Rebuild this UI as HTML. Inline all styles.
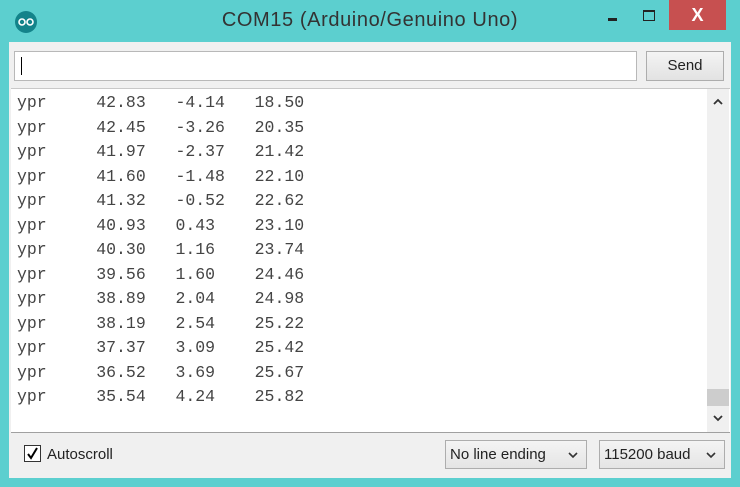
<!DOCTYPE html>
<html><head><style>
*{margin:0;padding:0;box-sizing:border-box}
body{width:740px;height:487px;background:#5ccfcf;position:relative;overflow:hidden;font-family:"Liberation Sans",sans-serif}
.abs{position:absolute}
#title{left:0;top:9px;width:740px;text-align:center;font-size:20px;color:#333;letter-spacing:0.6px}
#panel{left:9px;top:42px;width:722px;height:436px;background:#f0f0f0}
#input{left:14px;top:51px;width:623px;height:30px;background:#fff;border:1px solid #b8b8b8}
#send{left:646px;top:51px;width:78px;height:30px;background:linear-gradient(#f4f4f4,#e2e2e2);border:1px solid #adadad;font-size:15px;text-align:center;line-height:28px;color:#222}
#text{left:11px;top:88px;width:719px;height:345px;background:#fff;border-top:1px solid #c8c8c8;border-bottom:1px solid #a0a0a0}
#lines{left:17px;top:91px;font-family:"Liberation Mono",monospace;font-size:16.5px;color:#444;white-space:pre;tab-size:8;line-height:24.5px}
#sb{left:707px;top:89px;width:22px;height:343px;background:#f0f0f0}
.dd{top:440px;height:29px;border:1px solid #adadad;background:linear-gradient(#f4f4f4,#e4e4e4);font-size:15px;color:#222;line-height:27px;padding-left:4px}
.dd svg{position:absolute;right:8px;top:11px}
</style></head><body>
<svg class="abs" style="left:14px;top:10px" width="24" height="24"><circle cx="12" cy="12" r="11" fill="#13838a"/><circle cx="8" cy="12" r="3" fill="none" stroke="#fff" stroke-width="1.6"/><circle cx="16" cy="12" r="3" fill="none" stroke="#fff" stroke-width="1.6"/></svg>
<div class="abs" id="title">COM15 (Arduino/Genuino Uno)</div>
<div class="abs" style="left:608px;top:18px;width:9px;height:3px;background:#222"></div>
<div class="abs" style="left:643px;top:10px;width:12px;height:11px;border:1.5px solid #222;border-top-width:2.5px"></div>
<div class="abs" style="left:669px;top:0;width:57px;height:30px;background:#c75050;color:#fff;font-size:18px;text-align:center;line-height:30px;font-weight:bold">X</div>
<div class="abs" id="panel"></div>
<div class="abs" id="input"><div style="position:absolute;left:6px;top:5px;width:1px;height:18px;background:#000"></div></div>
<div class="abs" id="send">Send</div>
<div class="abs" id="text"></div>
<div class="abs" id="sb">
<div style="position:absolute;left:0;top:300px;width:22px;height:17px;background:#cdcdcd"></div>
<svg style="position:absolute;left:6px;top:9px" width="10" height="7"><path d="M1 6 L5 2 L9 6" stroke="#333" stroke-width="1.8" fill="none"/></svg>
<svg style="position:absolute;left:6px;top:326px" width="10" height="7"><path d="M1 1 L5 5 L9 1" stroke="#333" stroke-width="1.8" fill="none"/></svg>
</div>
<div class="abs" id="lines">ypr	42.83	-4.14	18.50
ypr	42.45	-3.26	20.35
ypr	41.97	-2.37	21.42
ypr	41.60	-1.48	22.10
ypr	41.32	-0.52	22.62
ypr	40.93	0.43	23.10
ypr	40.30	1.16	23.74
ypr	39.56	1.60	24.46
ypr	38.89	2.04	24.98
ypr	38.19	2.54	25.22
ypr	37.37	3.09	25.42
ypr	36.52	3.69	25.67
ypr	35.54	4.24	25.82</div>
<div class="abs" style="left:24px;top:445px;width:17px;height:17px;border:1px solid #333;background:#fff"><svg width="15" height="15"><path d="M3 8 L6 12 L12 2" stroke="#000" stroke-width="2" fill="none"/></svg></div>
<div class="abs" style="left:47px;top:446px;font-size:15px;color:#222">Autoscroll</div>
<div class="abs dd" style="left:445px;width:142px">No line ending<svg width="10" height="7"><path d="M1 1 L5 5 L9 1" stroke="#333" stroke-width="1.6" fill="none"/></svg></div>
<div class="abs dd" style="left:599px;width:126px">115200 baud<svg width="10" height="7"><path d="M1 1 L5 5 L9 1" stroke="#333" stroke-width="1.6" fill="none"/></svg></div>
</body></html>
